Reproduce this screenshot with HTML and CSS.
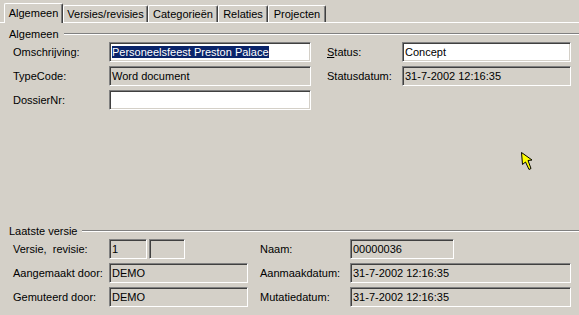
FILE: index.html
```html
<!DOCTYPE html>
<html lang="nl">
<head>
    <meta charset="UTF-8">
    <title>Document eigenschappen</title>
    <link rel="stylesheet" href="styles.css">
</head>
<body>
    <div class="tabs">
        <div class="tab active t1">Algemeen</div>
        <div class="tab t2">Versies/revisies</div>
        <div class="tab t3">Categorieën</div>
        <div class="tab t4">Relaties</div>
        <div class="tab t5">Projecten</div>
    </div>

    <div class="panel">
        <div class="group-title"><span>Algemeen</span><i></i></div>
        <div class="form-top">
            <label>Omschrijving:</label>
            <div class="field wide"><span class="sel">Personeelsfeest Preston Palace</span></div>
            <label><u>S</u>tatus:</label>
            <div class="field">Concept</div>

            <label>TypeCode:</label>
            <div class="field wide ro">Word document</div>
            <label>Statusdatum:</label>
            <div class="field ro">31-7-2002 12:16:35</div>

            <label>DossierNr:</label>
            <div class="field wide"></div>
        </div>

        <div class="group-title last"><span>Laatste versie</span><i></i></div>
        <div class="form-bottom">
            <label>Versie,&nbsp; revisie:</label>
            <div class="pair">
                <div class="field ro small">1</div>
                <div class="field ro small2"></div>
            </div>
            <label>Naam:</label>
            <div class="field ro naam">00000036</div>

            <label>Aangemaakt door:</label>
            <div class="field ro mid">DEMO</div>
            <label>Aanmaakdatum:</label>
            <div class="field ro">31-7-2002 12:16:35</div>

            <label>Gemuteerd door:</label>
            <div class="field ro mid">DEMO</div>
            <label>Mutatiedatum:</label>
            <div class="field ro">31-7-2002 12:16:35</div>
        </div>
    </div>

    <!-- muiscursor -->
    <svg class="cursor" width="14" height="20" viewBox="0 0 14 20">
        <path d="M0.5 0.5 L1.5 12.5 L4.5 10 L8 17.5 L10 16.5 L7 8.5 L11 8 Z" fill="#ffff00" stroke="#000" stroke-width="1"/>
    </svg>
</body>
</html>
```

FILE: styles.css
```css
body {
    margin: 0;
    background-color: #d4d0c8;
    font-family: "Liberation Sans", Arial, sans-serif;
    font-size: 11px;
    color: #000;
    position: relative;
    height: 315px;
    overflow: hidden;
}
.tabs {
    display: flex;
    align-items: flex-end;
    height: 22px;
    padding-left: 4px;
}
.tab {
    height: 17px;
    line-height: 16px;
    border: 1px solid #fff;
    border-right-color: #404040;
    border-bottom: none;
    border-radius: 2px 2px 0 0;
    box-shadow: inset -1px 0 #808080;
    box-sizing: border-box;
    text-align: center;
    white-space: nowrap;
}
.tab.active {
    height: 20px;
    line-height: 18px;
    margin-bottom: -1px;
    background-color: #d4d0c8;
    position: relative;
    z-index: 1;
}
.t1 { width: 59px; }
.t2 { width: 85px; }
.t3 { width: 70px; }
.t4 { width: 50px; }
.t5 { width: 58px; }

.panel {
    border-top: 1px solid #fff;
}
.group-title {
    display: flex;
    align-items: center;
    height: 14px;
    margin-top: 4px;
    padding-left: 9px;
}
.group-title i {
    flex: 1;
    margin-left: 5px;
    border-top: 1px solid #808080;
    border-bottom: 1px solid #fff;
}
.group-title.last {
    margin-top: 114px;
}
.form-top {
    display: grid;
    grid-template-columns: 96px 218px 75px 169px;
    row-gap: 4px;
    grid-auto-rows: 20px;
    margin-top: 1px;
    padding-left: 13px;
}
.form-bottom {
    display: grid;
    grid-template-columns: 96px 151px 90px 221px;
    row-gap: 4px;
    grid-auto-rows: 20px;
    margin-top: 1px;
    padding-left: 13px;
}
label {
    display: flex;
    align-items: center;
    white-space: nowrap;
}
.field {
    box-sizing: border-box;
    height: 20px;
    border: 1px solid;
    border-color: #808080 #fff #fff #808080;
    box-shadow: inset 1px 1px 0 #404040, inset -1px -1px 0 #d4d0c8;
    background-color: #fff;
    padding: 0 0 0 2px;
    line-height: 18px;
    white-space: nowrap;
    overflow: hidden;
}
.field.ro {
    background-color: #d4d0c8;
}
.field.wide {
    width: 202px;
}
.field.mid {
    width: 139px;
}
.sel {
    background-color: #0a246a;
    color: #fff;
}
.pair {
    display: flex;
    gap: 2px;
}
.field.small {
    width: 38px;
}
.field.small2 {
    width: 36px;
}
.field.naam {
    width: 104px;
}
.cursor {
    position: absolute;
    left: 521px;
    top: 152px;
}
```
